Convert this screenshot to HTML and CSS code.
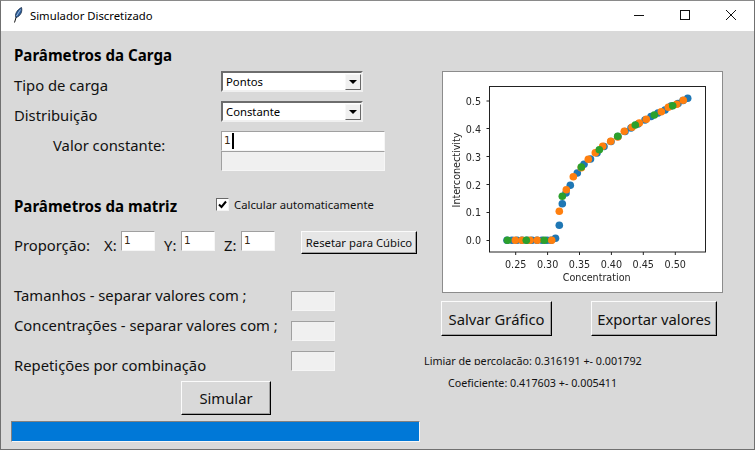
FILE: index.html
```html
<!DOCTYPE html>
<html lang="pt">
<head>
<meta charset="utf-8">
<title>Simulador Discretizado</title>
<link rel="stylesheet" href="styles.css">
</head>
<body>
<div class="window">
  <header class="titlebar">
    <svg class="feather" width="10" height="16" viewBox="0 0 10 16"><path d="M1.500 15.500 3.500 9" stroke="#111" fill="none"/><path d="M3 10.500C1.500 8 3.500 3 8.500 .5 9.500 4 8 9 3 10.500Z" fill="#2c5f9e" stroke="#10243f" stroke-width=".8"/><path d="M3.500 9 7.500 2.500" stroke="#cfe0f2" stroke-width=".7" fill="none"/></svg>
    <span class="title">Simulador Discretizado</span>
    <div class="controls">
      <svg class="control" width="46" height="30" viewBox="0 0 46 30"><path d="M18 14.500H28" stroke="#111"/></svg>
      <svg class="control" width="46" height="30" viewBox="0 0 46 30"><rect x="18.500" y="9.500" width="9" height="9" fill="none" stroke="#111"/></svg>
      <svg class="control" width="46" height="30" viewBox="0 0 46 30"><path d="M18 9 28 19M28 9 18 19" stroke="#111"/></svg>
    </div>
  </header>
  <main class="content">
    <section class="left">
      <h2 class="heading heading-load">Parâmetros da Carga</h2>
      <div class="row row-type">
        <label class="label label-wide">Tipo de carga</label>
        <div class="combo"><span class="combo-text">Pontos</span><span class="combo-arrow"></span></div>
      </div>
      <div class="row row-dist">
        <label class="label label-wide">Distribuição</label>
        <div class="combo"><span class="combo-text">Constante</span><span class="combo-arrow"></span></div>
      </div>
      <div class="row row-const">
        <label class="label label-indent">Valor constante:</label>
        <div class="stack">
          <div class="entry entry-long"><span class="entry-value">1</span><span class="caret"></span></div>
          <div class="entry entry-long entry-off"></div>
        </div>
      </div>
      <div class="row row-matrix">
        <h2 class="heading heading-matrix">Parâmetros da matriz</h2>
        <div class="check"><svg width="11" height="11" viewBox="0 0 11 11"><path d="M2 5.500 4.500 8 9 2.500" fill="none" stroke="#000" stroke-width="2"/></svg></div>
        <span class="check-label">Calcular automaticamente</span>
      </div>
      <div class="row row-ratio">
        <span class="label label-ratio">Proporção:</span>
        <span class="label axis axis-x">X:</span>
        <div class="entry entry-short"><span class="entry-value">1</span></div>
        <span class="label axis axis-y">Y:</span>
        <div class="entry entry-short"><span class="entry-value">1</span></div>
        <span class="label axis axis-z">Z:</span>
        <div class="entry entry-short"><span class="entry-value">1</span></div>
        <button class="button button-reset">Resetar para Cúbico</button>
      </div>
      <div class="row row-sizes">
        <label class="label label-field">Tamanhos - separar valores com ;</label>
        <div class="entry entry-mid entry-off"></div>
      </div>
      <div class="row row-conc">
        <label class="label label-field">Concentrações - separar valores com ;</label>
        <div class="entry entry-mid entry-off"></div>
      </div>
      <div class="row row-reps">
        <label class="label label-field label-low">Repetições por combinação</label>
        <div class="entry entry-mid entry-off"></div>
      </div>
      <div class="row row-run"><button class="button button-big button-run">Simular</button></div>
      <div class="progress"></div>
    </section>
    <section class="right">
      <div class="plot">
        <svg width="279" height="220" viewBox="443 72 279 220">
          <g class="blue">
            <circle cx="507" cy="240.300" r="3.800"/><circle cx="512" cy="240.300" r="3.800"/><circle cx="517" cy="240.300" r="3.800"/><circle cx="522" cy="240.300" r="3.800"/><circle cx="527" cy="240.300" r="3.800"/><circle cx="532" cy="240.300" r="3.800"/><circle cx="537" cy="240.300" r="3.800"/><circle cx="542" cy="240.300" r="3.800"/><circle cx="547" cy="240.300" r="3.800"/><circle cx="551" cy="240.300" r="3.800"/>
            <circle cx="555.500" cy="238.300" r="3.800"/><circle cx="559.300" cy="225.300" r="3.800"/><circle cx="562.300" cy="203.700" r="3.800"/><circle cx="566" cy="193" r="3.800"/><circle cx="570.300" cy="185.300" r="3.800"/><circle cx="577.300" cy="173" r="3.800"/><circle cx="584" cy="164.300" r="3.800"/><circle cx="590.500" cy="159" r="3.800"/><circle cx="597" cy="153" r="3.800"/><circle cx="604" cy="146.500" r="3.800"/><circle cx="611" cy="141.500" r="3.800"/><circle cx="618" cy="136.500" r="3.800"/><circle cx="625" cy="131.500" r="3.800"/><circle cx="631" cy="128" r="3.800"/><circle cx="638" cy="124" r="3.800"/><circle cx="645" cy="120" r="3.800"/><circle cx="651" cy="116.500" r="3.800"/><circle cx="658" cy="113" r="3.800"/><circle cx="665" cy="110" r="3.800"/><circle cx="671" cy="106" r="3.800"/><circle cx="678" cy="103.500" r="3.800"/><circle cx="683" cy="100.500" r="3.800"/><circle cx="687.700" cy="98.300" r="3.800"/>
          </g>
          <g class="orange">
            <circle cx="515.300" cy="240.300" r="3.800"/><circle cx="522" cy="240.300" r="3.800"/><circle cx="530" cy="240.300" r="3.800"/><circle cx="537.300" cy="240.300" r="3.800"/><circle cx="551.700" cy="240.300" r="3.800"/>
            <circle cx="559.300" cy="211.300" r="3.800"/><circle cx="566.300" cy="189.700" r="3.800"/><circle cx="573.300" cy="176.700" r="3.800"/><circle cx="581.300" cy="167.700" r="3.800"/><circle cx="588.300" cy="159.300" r="3.800"/><circle cx="595.300" cy="152.700" r="3.800"/><circle cx="602.700" cy="146.300" r="3.800"/><circle cx="610.700" cy="141.300" r="3.800"/><circle cx="617.700" cy="137" r="3.800"/><circle cx="624.300" cy="131.300" r="3.800"/><circle cx="632" cy="127.300" r="3.800"/><circle cx="639.300" cy="123" r="3.800"/><circle cx="646.300" cy="119.300" r="3.800"/><circle cx="661.300" cy="111.700" r="3.800"/><circle cx="668.300" cy="107.300" r="3.800"/><circle cx="676.700" cy="104.300" r="3.800"/><circle cx="683.300" cy="100.300" r="3.800"/>
          </g>
          <g class="green">
            <circle cx="507.500" cy="240.300" r="3.800"/><circle cx="526.300" cy="240.300" r="3.800"/><circle cx="544.300" cy="240.300" r="3.800"/><circle cx="562.300" cy="196.300" r="3.800"/><circle cx="581.300" cy="167" r="3.800"/><circle cx="599.300" cy="149.700" r="3.800"/><circle cx="617.700" cy="136.300" r="3.800"/><circle cx="635.300" cy="125" r="3.800"/><circle cx="654.300" cy="115" r="3.800"/><circle cx="672.700" cy="105.700" r="3.800"/>
          </g>
          <rect class="axes" x="489.500" y="86.500" width="216" height="165.500"/>
          <path class="ticks" d="M515.700 252v3M547.600 252v3M579.500 252v3M611.400 252v3M643.300 252v3M675.300 252v3M489.500 101h-3M489.500 128.500h-3M489.500 156.500h-3M489.500 184.500h-3M489.500 212.500h-3M489.500 240.500h-3"/>
          <g class="tick-x">
            <text x="515.700" y="268">0.25</text><text x="547.600" y="268">0.30</text><text x="579.500" y="268">0.35</text><text x="611.400" y="268">0.40</text><text x="643.300" y="268">0.45</text><text x="675.300" y="268">0.50</text>
          </g>
          <g class="tick-y">
            <text x="481" y="105">0.5</text><text x="481" y="132.500">0.4</text><text x="481" y="160.500">0.3</text><text x="481" y="188.500">0.2</text><text x="481" y="216">0.1</text><text x="481" y="244">0.0</text>
          </g>
          <text class="axis-title" x="596.700" y="281">Concentration</text>
          <text class="axis-title" transform="translate(459.500 170) rotate(-90)">Interconectivity</text>
        </svg>
      </div>
      <div class="actions">
        <button class="button button-big button-save">Salvar Gráfico</button>
        <button class="button button-big button-export">Exportar valores</button>
      </div>
      <p class="result result-limit">Limiar de percolação: 0.316191 +- 0.001792</p>
      <p class="result result-coef">Coeficiente: 0.417603 +- 0.005411</p>
    </section>
  </main>
</div>
</body>
</html>
```

FILE: styles.css
```css
* { box-sizing: border-box; }
html, body { margin: 0; padding: 0; }
body { width: 755px; height: 450px; overflow: hidden; font-family: "Noto Sans", "Open Sans", sans-serif; color: #111; background: #d9d9d9; }

.window { width: 755px; height: 450px; border: 1px solid #707070; border-top-color: #8a8a8a; display: flex; flex-direction: column; overflow: hidden; }

.titlebar { height: 30px; flex: none; background: #fff; display: flex; align-items: center; }
.feather { margin: 0 0 2px 12px; flex: none; }
.title { margin: 0 0 2px 7px; font-size: 11.300px; color: #000; }
.controls { margin-left: auto; display: flex; }
.control { display: block; }

.content { flex: 1; display: flex; background: #d9d9d9; }
.left { width: 424px; flex: none; padding-left: 13px; }
.right { flex: 1; padding-top: 40px; }

.heading { margin: 0; font-size: 15.100px; font-weight: 700; line-height: 20px; color: #000; white-space: nowrap; }
.heading-load { margin-top: 14px; }
.row { display: flex; align-items: center; }
.row-type { margin-top: 6px; height: 21px; }
.row-dist { margin-top: 9px; height: 21px; }
.row-const { margin-top: 9px; align-items: flex-start; }
.row-matrix { margin-top: 25px; height: 20px; }
.row-ratio { margin-top: 15px; height: 23px; align-items: flex-start; }
.row-sizes, .row-conc, .row-reps { margin-top: 10px; height: 20px; align-items: flex-start; }
.row-sizes { margin-top: 37px; }
.row-run { margin-top: 10px; padding-left: 167px; }

.label { font-size: 14.800px; line-height: 20px; white-space: nowrap; color: #111; }
.label-wide { width: 207px; position: relative; top: 3px; }
.label-indent { width: 168px; margin-left: 39px; line-height: 28px; }
.label-ratio { width: 90px; line-height: 29px; }
.axis { line-height: 29px; }
.axis-x { width: 17px; }
.axis-y { width: 17px; margin-left: 9px; }
.axis-z { width: 17px; margin-left: 9px; }
.label-field { width: 277px; line-height: 8px; }
.label-low { line-height: 28px; }

.combo { width: 142px; height: 21px; background: #fff; border: 2px solid; border-color: #6d6d6d #f0f0f0 #f0f0f0 #6d6d6d; display: flex; align-items: center; justify-content: space-between; padding-left: 3px; }
.combo-text { font-size: 11.300px; color: #000; }
.combo-arrow { width: 16px; height: 16px; background: #f0f0f0; border: 1px solid; border-color: #f8f8f8 #696969 #696969 #f8f8f8; position: relative; }
.combo-arrow::after { content: ""; position: absolute; left: 3px; top: 5px; border: 4px solid transparent; border-top: 4px solid #000; border-bottom: 0; }

.stack { display: flex; flex-direction: column; }
.entry { height: 20px; background: #fff; border: 1px solid; border-color: #a0a0a0 #f6f6f6 #f6f6f6 #a0a0a0; display: flex; align-items: flex-start; flex: none; }
.entry-off { background: #f0f0f0; }
.entry-long { width: 164px; }
.entry-short { width: 34px; }
.entry-mid { width: 44px; }
.entry-value { font-family: "DejaVu Sans", sans-serif; font-size: 10.500px; line-height: 17px; color: #3a2c14; padding-left: 2px; }
.caret { width: 2px; height: 16px; background: #000; margin: 1px 0 0 1px; }

.heading-matrix { width: 202px; }
.check { width: 13px; height: 13px; background: #fff; border: 1px solid; border-color: #696969 #f4f4f4 #f4f4f4 #696969; display: flex; position: relative; top: -2px; }
.check svg { display: block; }
.check-label { margin-left: 5px; font-size: 11.300px; position: relative; top: -2px; color: #111; }

.button { background: #f0f0f0; border: 1px solid; border-color: #fbfbfb #000 #000 #fbfbfb; box-shadow: inset -1px -1px 0 #a0a0a0; font-family: inherit; color: #111; padding: 0; margin: 0; white-space: nowrap; }
.button-big { height: 35px; font-size: 14.800px; background: #d9d9d9; }
.button-reset { width: 116px; height: 23px; font-size: 11.300px; margin-left: 26px; background: #e6e6e6; }
.button-run { width: 90px; height: 34px; }
.progress { margin: 6px 0 0 -3px; width: 409px; height: 21px; background: #0078d7; border: 1px solid; border-color: #808080 #f6f6f6 #f6f6f6 #808080; }

.plot { margin-left: 17px; width: 281px; height: 222px; background: #fff; border: 1px solid #8c8c8c; }
.plot svg { display: block; filter: blur(.3px); }
.blue { fill: #1f77b4; }
.orange { fill: #ff7f0e; }
.green { fill: #2ca02c; }
.axes { fill: none; stroke: #222; stroke-width: 1; }
.ticks { stroke: #222; stroke-width: 1; fill: none; }
.plot text { font-family: "DejaVu Sans", sans-serif; fill: #262626; font-size: 9.600px; }
.tick-x { text-anchor: middle; }
.tick-y { text-anchor: end; }
.axis-title { text-anchor: middle; }

.actions { display: flex; margin-top: 8px; margin-left: 16px; }
.button-save { width: 111px; }
.button-export { width: 126px; margin-left: 39px; }

.result { margin: 0; font-size: 10.750px; line-height: 14px; white-space: nowrap; color: #111; overflow: hidden; }
.result-limit { margin-top: 18px; height: 11px; margin-left: -1px; }
.result-coef { margin-top: 11px; margin-left: 23px; }
```
